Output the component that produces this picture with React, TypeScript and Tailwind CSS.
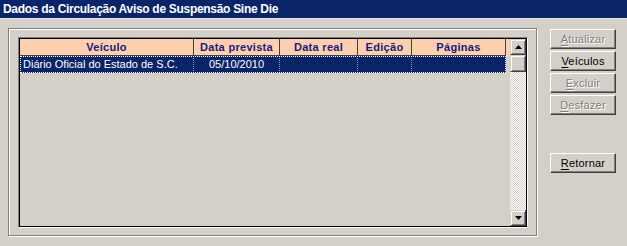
import React from 'react';

const font = { fontFamily: '"Liberation Sans", Arial, sans-serif' };

const columns = [
  { label: 'Veículo', w: 'w-[174px]' },
  { label: 'Data prevista', w: 'w-[86px]' },
  { label: 'Data real', w: 'w-[78px]' },
  { label: 'Edição', w: 'w-[54px]' },
  { label: 'Páginas', w: 'w-[94px]' },
];

const rowCells = ['Diário Oficial do Estado de S.C.', '05/10/2010', '', '', ''];

function Mnemonic({ text, enabled }: { text: string; enabled: boolean }) {
  return (
    <span
      className={enabled ? 'text-black' : 'text-[#808080] [text-shadow:1px_1px_0_#fff]'}
    >
      <span className="underline underline-offset-[2px]">{text[0]}</span>
      {text.slice(1)}
    </span>
  );
}

function WinButton({ label, enabled = true }: { label: string; enabled?: boolean }) {
  return (
    <div className="w-[66px] h-[20px] flex items-center justify-center text-[11px] tracking-[0.2px] bg-[#d4d0c8] border border-t-white border-l-white border-r-[#404040] border-b-[#404040] shadow-[inset_-1px_-1px_0_#808080]">
      <Mnemonic text={label} enabled={enabled} />
    </div>
  );
}

function Arrow({ up }: { up: boolean }) {
  return (
    <div className="w-[16px] h-[16px] flex items-center justify-center bg-[#d4d0c8] border border-t-[#d4d0c8] border-l-[#d4d0c8] border-r-[#404040] border-b-[#404040] shadow-[inset_1px_1px_0_#fff,inset_-1px_-1px_0_#808080]">
      <svg width="7" height="4" viewBox="0 0 7 4">
        {up ? <path d="M3.5 0 L7 4 L0 4 Z" fill="#000" /> : <path d="M0 0 L7 0 L3.5 4 Z" fill="#000" />}
      </svg>
    </div>
  );
}

export default function App() {
  return (
    <div className="w-[627px] h-[246px] bg-[#d4d0c8] overflow-hidden" style={font}>
      <div className="h-[19px] bg-[#0a246a] border-b border-[#e6e3dc] pl-[3px] flex items-center text-white font-bold text-[12px] tracking-[-0.3px]">
        Dados da Circulação Aviso de Suspensão Sine Die
      </div>
      <div className="flex pt-[9px]">
        <div className="ml-[8px] w-[529px] h-[208px] border border-[#808080] shadow-[inset_1px_1px_0_#fff,1px_1px_0_#fff] pt-[8px] pl-[9px]">
          <div className="w-[510px] h-[191px] border border-t-[#808080] border-l-[#808080] border-r-white border-b-white">
            <div className="w-full h-full border border-black flex bg-[#d4d0c8]">
              <div className="w-[490px] flex flex-col">
                <div className="flex h-[17px] bg-[#fcd0ae]">
                  {columns.map((c) => (
                    <div
                      key={c.label}
                      className={`${c.w} h-full border-r border-b border-[#404040] flex items-center justify-center text-[11px] font-bold text-[#1a1a80] tracking-[0.3px]`}
                    >
                      {c.label}
                    </div>
                  ))}
                </div>
                <div className="flex h-[17px] w-[486px] bg-[#0a246a] outline outline-1 outline-dotted outline-white -outline-offset-1">
                  {rowCells.map((t, i) => (
                    <div
                      key={i}
                      className={`${columns[i].w} h-full flex items-center text-[11px] text-white ${i === 0 ? 'pl-[3px]' : 'justify-center'} ${i < 4 ? 'border-r border-dotted border-[#8a96b8]' : ''}`}
                    >
                      {t}
                    </div>
                  ))}
                </div>
              </div>
              <div className="w-[16px] h-full flex flex-col">
                <Arrow up />
                <div className="w-[16px] h-[17px] bg-[#d4d0c8] border border-t-[#d4d0c8] border-l-[#d4d0c8] border-r-[#404040] border-b-[#404040] shadow-[inset_1px_1px_0_#fff,inset_-1px_-1px_0_#808080]" />
                <div className="flex-1 bg-[repeating-conic-gradient(#fff_0%_25%,#d4d0c8_0%_50%)] bg-[length:2px_2px]" />
                <Arrow up={false} />
              </div>
            </div>
          </div>
        </div>
        <div className="ml-[13px] pt-[1px] flex flex-col gap-[2px]">
          <WinButton label="Atualizar" enabled={false} />
          <WinButton label="Veículos" />
          <WinButton label="Excluir" enabled={false} />
          <WinButton label="Desfazer" enabled={false} />
          <div className="h-[34px]" />
          <WinButton label="Retornar" />
        </div>
      </div>
    </div>
  );
}
